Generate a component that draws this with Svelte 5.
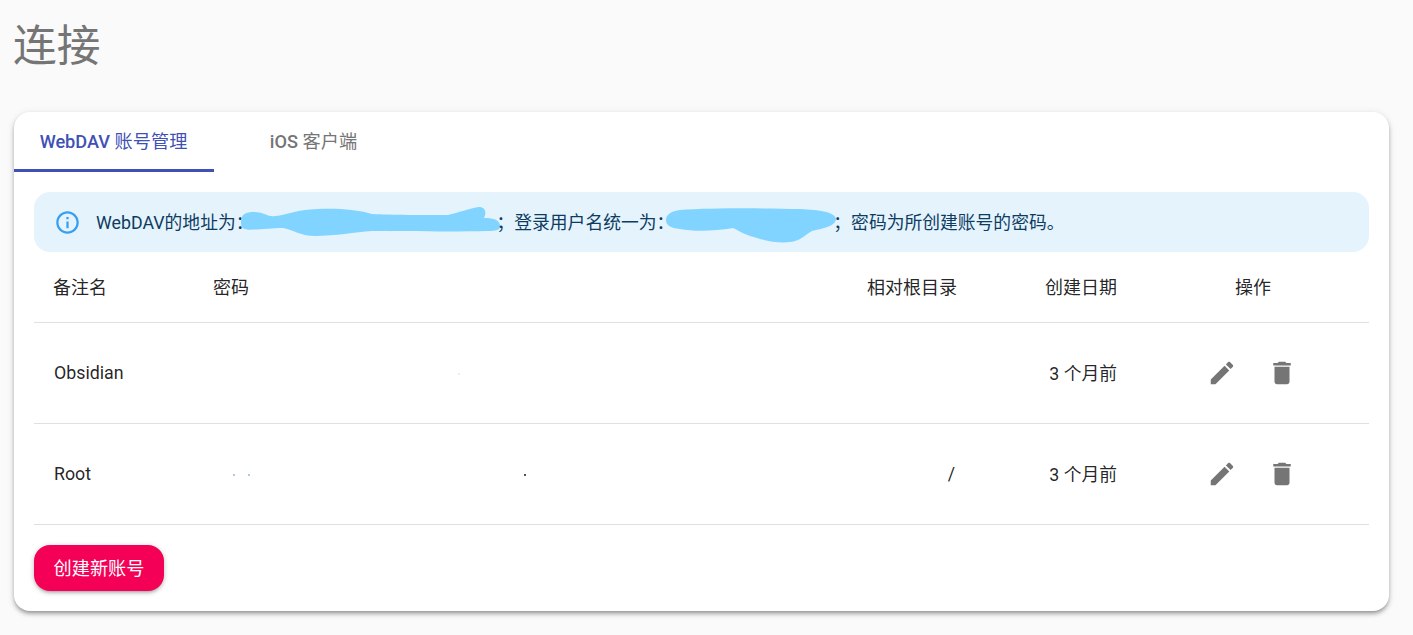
<script>
  const rows = [
    { name: 'Obsidian', dir: '', date: '3 个月前', specks: [{ gap: 264, tone: 'faint' }] },
    { name: 'Root', dir: '/', date: '3 个月前', specks: [{ gap: 39, tone: 'blue' }, { gap: 13, tone: 'blue' }, { gap: 274, tone: 'dark' }] }
  ];
</script>

<div class="page">
  <h1 class="title">连接</h1>

  <section class="card">
    <div class="tabs">
      <button class="tab active"><b>WebDAV</b> 账号管理</button>
      <button class="tab"><b>iOS</b> 客户端</button>
    </div>

    <div class="content">
      <div class="alert">
        <svg class="alert-icon" viewBox="0 0 24 24">
          <path d="M11 7h2v2h-2zm0 4h2v6h-2zm1-9C6.48 2 2 6.48 2 12s4.48 10 10 10 10-4.48 10-10S17.52 2 12 2zm0 18c-4.41 0-8-3.59-8-8s3.59-8 8-8 8 3.59 8 8-3.59 8-8 8z"/>
        </svg>
        <div class="alert-text">
          <span>WebDAV的地址为：</span>
          <svg class="scribble one" viewBox="240 205 262 34">
            <path d="M241 222C241 214 246 212 254 212C262 212 266 215 270 216C280 217 290 212 305 210C325 208 352 208 372 214C390 215 425 215 448 215C458 213 470 208 479 207C485 207 487 212 484 218C492 218 499 219 500 225C501 230 496 231 488 231C450 232 405 231 372 231C355 232 335 236 315 236C300 236 292 229 283 228C268 228 250 231 245 229C241 228 241 225 241 222Z"/>
          </svg>
          <span>；登录用户名统一为：</span>
          <svg class="scribble two" viewBox="664 205 174 40">
            <path d="M666 220C666 214 672 211 680 210C710 208 760 208 800 209C820 210 835 212 836 219C836 225 826 228 812 231C805 235 800 241 790 242C775 244 755 238 745 234C738 231 736 229 733 228C715 231 695 232 680 229C670 228 666 225 666 220Z"/>
          </svg>
          <span>；密码为所创建账号的密码。</span>
        </div>
      </div>

      <table>
        <thead>
          <tr>
            <th class="col-name">备注名</th>
            <th>密码</th>
            <th class="col-dir">相对根目录</th>
            <th class="col-date">创建日期</th>
            <th class="col-ops">操作</th>
          </tr>
        </thead>
        <tbody>
          {#each rows as row}
            <tr>
              <td class="col-name">{row.name}</td>
              <td class="password">
                {#each row.specks as s}
                  <span class="speck {s.tone}" style="margin-left: {s.gap}px"></span>
                {/each}
              </td>
              <td class="col-dir">{row.dir}</td>
              <td class="col-date"><span class="date">{row.date}</span></td>
              <td class="col-ops">
                <div class="actions">
                  <button class="icon-btn" aria-label="编辑">
                    <svg viewBox="0 0 24 24"><path d="M3 17.25V21h3.75L17.81 9.94l-3.75-3.75L3 17.25zM20.71 7.04c.39-.39.39-1.02 0-1.41l-2.34-2.34c-.39-.39-1.02-.39-1.41 0l-1.83 1.83 3.75 3.75 1.83-1.83z"/></svg>
                  </button>
                  <button class="icon-btn" aria-label="删除">
                    <svg viewBox="0 0 24 24"><path d="M6 19c0 1.1.9 2 2 2h8c1.1 0 2-.9 2-2V7H6v12zM19 4h-3.5l-1-1h-5l-1 1H5v2h14V4z"/></svg>
                  </button>
                </div>
              </td>
            </tr>
          {/each}
        </tbody>
      </table>

      <button class="create">创建新账号</button>
    </div>
  </section>
</div>

<style>
  :global(body) {
    background: #fafafa;
  }

  .page {
    height: 635px;
    box-sizing: border-box;
    padding: 0 24px 0 14px;
    font-family: Roboto, "Noto Sans CJK SC", sans-serif;
    overflow: hidden;
  }

  .title {
    margin: 0 0 0 -1px;
    height: 112px;
    box-sizing: border-box;
    padding-top: 15px;
    font-size: 43.75px;
    line-height: 62px;
    font-weight: 400;
    color: #757575;
  }

  .card {
    height: 499px;
    background: #fff;
    border-radius: 16px;
    box-shadow: 0 3px 4px -2px rgba(0, 0, 0, 0.3), 0 3px 5px rgba(0, 0, 0, 0.2), 0 1px 8px rgba(0, 0, 0, 0.08);
  }

  .tabs {
    display: flex;
    height: 60px;
  }

  .tab {
    width: 200px;
    height: 60px;
    border: 0;
    background: none;
    padding: 0 1px 4px 0;
    font: inherit;
    font-size: 18.2px;
    color: #757575;
  }

  .tab b {
    font-weight: 500;
  }

  .tab.active {
    color: #3f51b5;
    box-shadow: inset 0 -3px 0 #3f51b5;
  }

  .content {
    padding: 20px 20px 0;
  }

  .alert {
    display: flex;
    align-items: center;
    gap: 15px;
    height: 60px;
    box-sizing: border-box;
    padding: 0 20px;
    background: #e5f3fd;
    border-radius: 16px;
    color: #0d3c61;
    font-size: 17.8px;
  }

  .alert-icon {
    width: 27px;
    height: 27px;
    flex: none;
    fill: #2196f3;
    opacity: 0.9;
  }

  .alert-text {
    display: flex;
    align-items: center;
    white-space: nowrap;
    margin-top: -2px;
  }

  .scribble {
    fill: #81d4ff;
    flex: none;
  }

  .scribble.one {
    width: 262px;
    height: 34px;
    margin: 2px -6px 0 -13px;
  }

  .scribble.two {
    width: 174px;
    height: 40px;
    margin: 8px -5px 0 -10px;
  }

  table {
    width: 100%;
    border-collapse: collapse;
    table-layout: fixed;
    font-size: 17.8px;
    color: rgba(0, 0, 0, 0.87);
  }

  th, td {
    box-sizing: border-box;
    padding: 0 20px;
    border-bottom: 1px solid #e0e0e0;
    text-align: left;
    font-weight: 400;
  }

  th {
    padding-bottom: 2px;
    padding-left: 19px;
    font-size: 18px;
  }

  thead tr {
    height: 70px;
  }

  tbody tr {
    height: 101px;
  }

  .col-name {
    width: 160px;
  }

  .col-dir, .col-date {
    width: 160px;
    text-align: right;
  }

  td.col-dir {
    padding-right: 22px;
  }

  .col-ops {
    width: 232px;
    text-align: center;
  }

  th.col-ops {
    padding-left: 20px;
  }

  .date {
    position: relative;
    top: -1px;
  }

  .password {
    padding-left: 0;
  }

  .speck {
    display: inline-block;
    width: 2px;
    height: 2px;
    vertical-align: middle;
  }

  .speck.faint { background: #eceef0; }
  .speck.blue { background: #a8cde8; }
  .speck.dark { background: #44576a; }

  .actions {
    display: flex;
    justify-content: center;
    margin-left: -2px;
  }

  .icon-btn {
    width: 60px;
    height: 60px;
    padding: 15px;
    border: 0;
    background: none;
  }

  .icon-btn svg {
    display: block;
    width: 30px;
    height: 30px;
    fill: #757575;
  }

  .create {
    display: block;
    margin-top: 20px;
    width: 130px;
    height: 46px;
    padding: 0 0 2px;
    border: 0;
    border-radius: 16px;
    background: #f50057;
    color: #fff;
    font: inherit;
    font-size: 18.2px;
    box-shadow: 0 3px 3px -2px rgba(0, 0, 0, 0.2), 0 2px 4px rgba(0, 0, 0, 0.14), 0 1px 6px rgba(0, 0, 0, 0.12);
  }
</style>
